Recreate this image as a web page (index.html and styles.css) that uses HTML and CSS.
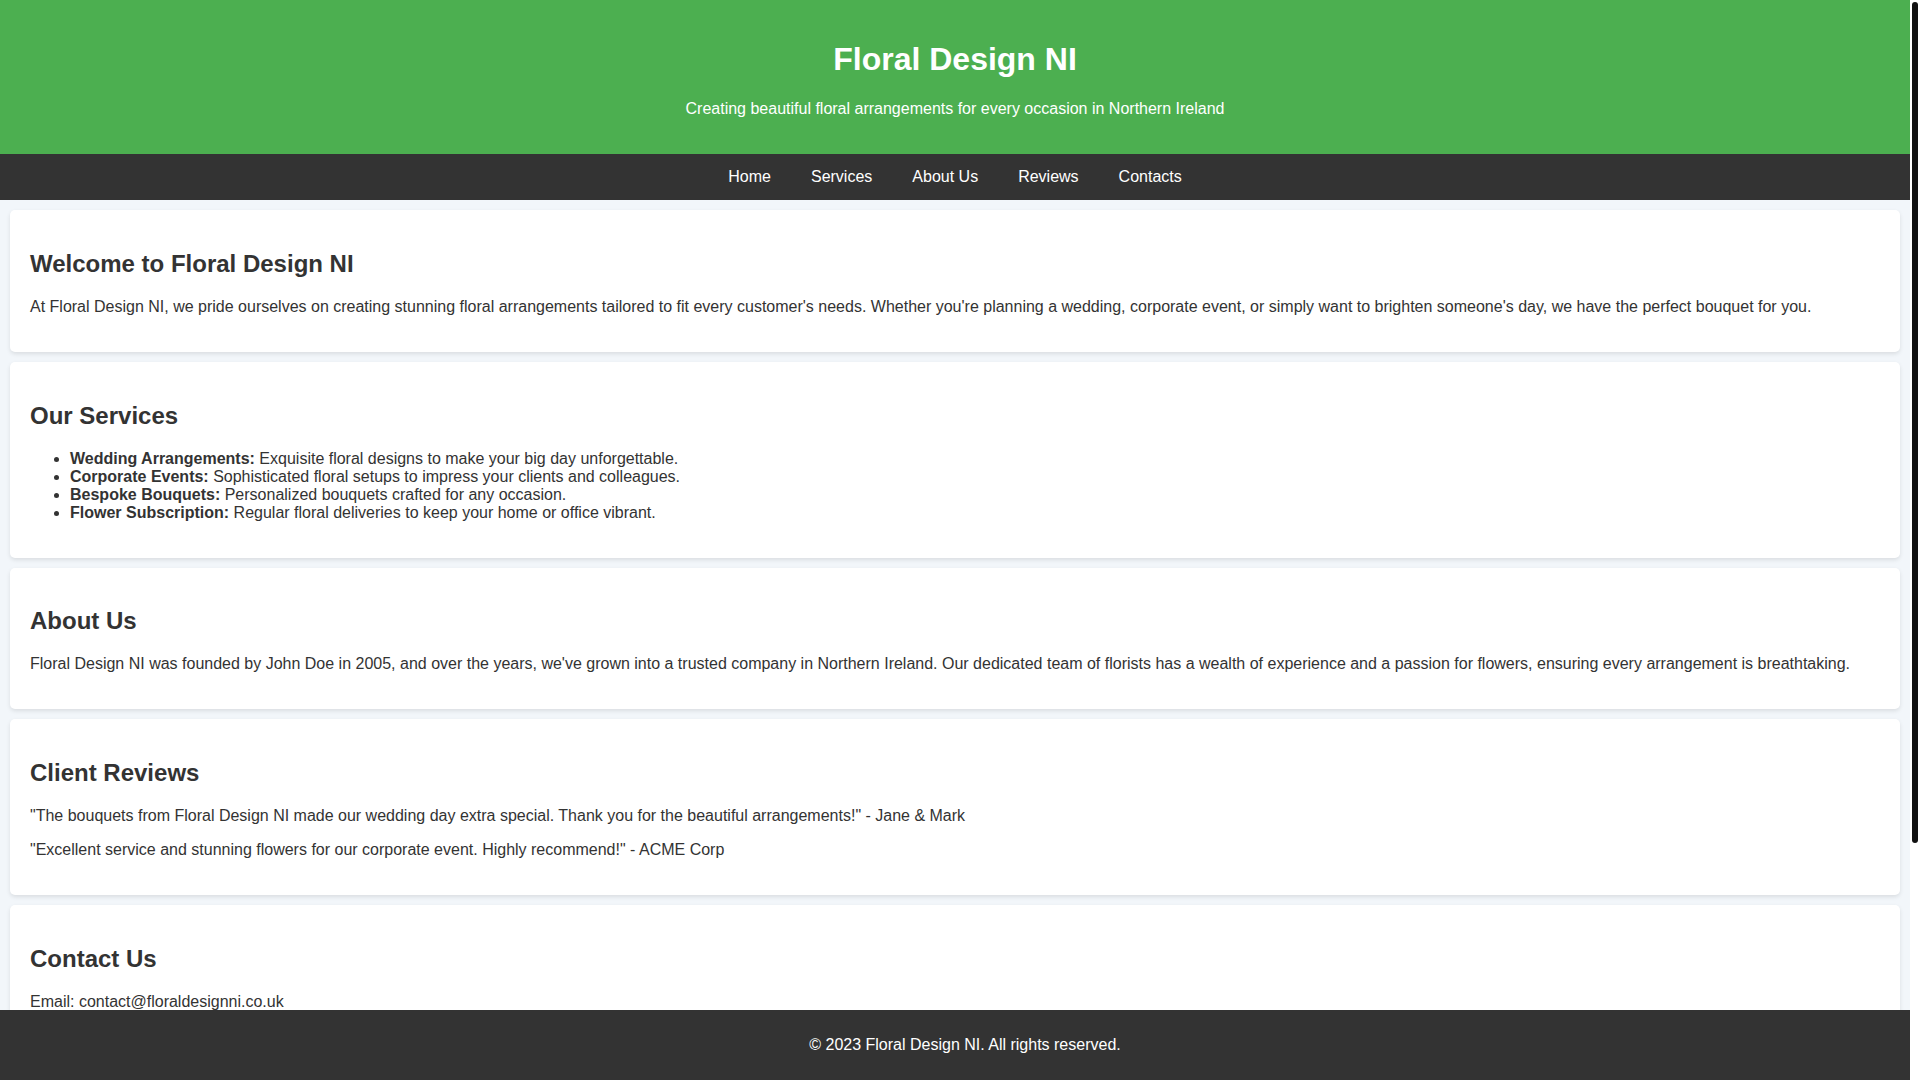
FILE: index.html
```html
<!DOCTYPE html>
<html lang="en">
<head>
<meta charset="utf-8">
<title>Floral Design NI</title>
<link rel="stylesheet" href="styles.css">
</head>
<body>
<div class="page">
  <header class="site-header">
    <h1>Floral Design NI</h1>
    <p>Creating beautiful floral arrangements for every occasion in Northern Ireland</p>
  </header>
  <nav class="site-nav">
    <a href="#home">Home</a>
    <a href="#services">Services</a>
    <a href="#about">About Us</a>
    <a href="#reviews">Reviews</a>
    <a href="#contact">Contacts</a>
  </nav>
  <main class="content">
    <section class="card" id="home">
      <h2>Welcome to Floral Design NI</h2>
      <p>At Floral Design NI, we pride ourselves on creating stunning floral arrangements tailored to fit every customer's needs. Whether you're planning a wedding, corporate event, or simply want to brighten someone's day, we have the perfect bouquet for you.</p>
    </section>
    <section class="card" id="services">
      <h2>Our Services</h2>
      <ul>
        <li><strong>Wedding Arrangements:</strong> Exquisite floral designs to make your big day unforgettable.</li>
        <li><strong>Corporate Events:</strong> Sophisticated floral setups to impress your clients and colleagues.</li>
        <li><strong>Bespoke Bouquets:</strong> Personalized bouquets crafted for any occasion.</li>
        <li><strong>Flower Subscription:</strong> Regular floral deliveries to keep your home or office vibrant.</li>
      </ul>
    </section>
    <section class="card" id="about">
      <h2>About Us</h2>
      <p>Floral Design NI was founded by John Doe in 2005, and over the years, we've grown into a trusted company in Northern Ireland. Our dedicated team of florists has a wealth of experience and a passion for flowers, ensuring every arrangement is breathtaking.</p>
    </section>
    <section class="card" id="reviews">
      <h2>Client Reviews</h2>
      <p>"The bouquets from Floral Design NI made our wedding day extra special. Thank you for the beautiful arrangements!" - Jane &amp; Mark</p>
      <p>"Excellent service and stunning flowers for our corporate event. Highly recommend!" - ACME Corp</p>
    </section>
    <section class="card" id="contact">
      <h2>Contact Us</h2>
      <p>Email: contact@floraldesignni.co.uk</p>
    </section>
  </main>
</div>
<div class="scrollbar" aria-hidden="true">
  <div class="scrollbar-thumb"></div>
</div>
<footer class="site-footer">
  <p>&copy; 2023 Floral Design NI. All rights reserved.</p>
</footer>
</body>
</html>
```

FILE: styles.css
```css
html,
body {
  margin: 0;
  height: 100%;
  overflow: hidden;
  background: #ffffff;
}

body {
  display: flex;
  font-family: "Liberation Sans", Arial, sans-serif;
  font-size: 16px;
  color: #333;
}

.page {
  flex: 1;
  min-width: 0;
  height: 100vh;
  overflow: hidden;
  background: #f2f6fa;
}

.scrollbar {
  width: 10px;
  flex: none;
  box-sizing: border-box;
  padding: 2px;
  background: #ffffff;
}

.scrollbar-thumb {
  height: 841px;
  background: #111111;
  border-radius: 3px;
}

.site-header {
  background: #4caf50;
  color: #ffffff;
  text-align: center;
  padding: 20px;
}

.site-header h1 {
  font-size: 32px;
  margin: 21.44px 0;
}

.site-header p {
  margin: 16px 0;
}

.site-nav {
  background: #333333;
  display: flex;
  justify-content: center;
  gap: 40px;
  padding: 14px 0;
}

.site-nav a {
  color: #ffffff;
  text-decoration: none;
}

.content {
  padding: 10px 10px 337px;
}

.card {
  background: #ffffff;
  border-radius: 5px;
  box-shadow: 0 2px 4px rgba(0, 0, 0, 0.1);
  padding: 20px;
  margin-bottom: 10px;
}

.card h2 {
  font-size: 24px;
  margin: 19.92px 0;
}

.card p {
  margin: 16px 0;
}

.card ul {
  margin: 16px 0;
  padding-left: 40px;
}

.site-footer {
  position: fixed;
  left: 0;
  right: 10px;
  bottom: 0;
  background: #333333;
  color: #ffffff;
  text-align: center;
  padding: 10px 0 10px 20px;
}

.site-footer p {
  margin: 16px 0;
}
```
